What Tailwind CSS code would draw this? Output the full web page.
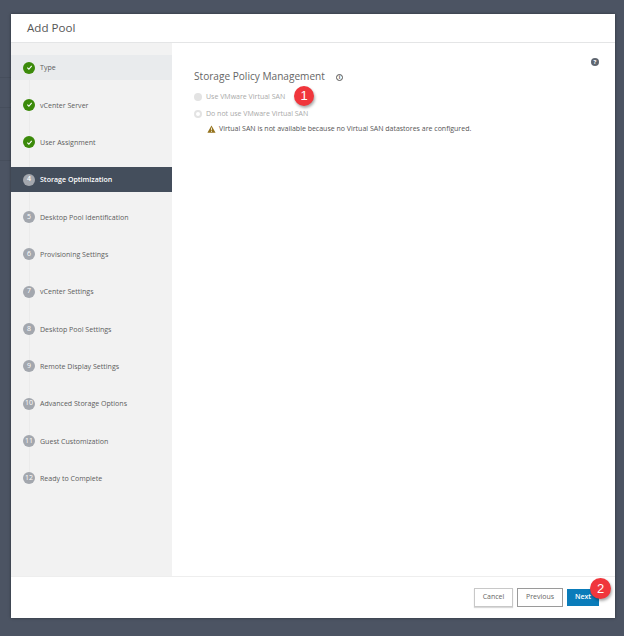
<!DOCTYPE html>
<html lang="en">
<head>
    <meta charset="UTF-8">
    <meta name="viewport" content="width=device-width, initial-scale=1.0">
    <title>Add Pool</title>
    <script src="https://cdn.jsdelivr.net/npm/@tailwindcss/browser@4"></script>
</head>
<body class="relative w-[624px] h-[636px] overflow-hidden bg-[#4c5463] font-['Open_Sans',sans-serif] pt-[14px] pl-[11px]">
    <!-- page dimmed behind the modal -->
    <div class="absolute left-0 top-0 w-[11px] h-[240px]">
        <div class="absolute left-0 top-[77px] w-full border-t border-[#464e5c]"></div>
        <div class="absolute left-0 top-[107px] w-full border-t border-[#464e5c]"></div>
        <div class="absolute left-0 top-[160px] w-full border-t border-[#464e5c]"></div>
    </div>

    <div class="relative w-[604px] h-[604px] bg-white flex flex-col shadow-[0_0_3px_rgba(0,0,0,0.4)]">
        <div class="h-[29px] shrink-0 border-b border-[#e4e5e6] pl-[16px] text-[11.6px] leading-[27px] text-[#565656]">Add Pool</div>

        <div class="flex flex-1 min-h-0">
            <!-- wizard steps -->
            <div class="relative w-[161px] shrink-0 bg-[#f2f2f2] pt-[12px] text-[7.05px] text-[#5d5d5d]">
                <div class="absolute left-[17.5px] top-[20px] h-[420px] border-l border-[#ebebeb]"></div>
                <div class="relative h-[25px] mb-[12.36px] flex items-center pl-[12px] gap-[5px] bg-[#e9ebed]">
                    <span class="w-[12px] h-[12px] rounded-full bg-[#3b8a0a] flex items-center justify-center">
                        <svg width="7" height="7" viewBox="0 0 8 8" fill="none" stroke="white" stroke-width="1.3"><path d="M1.5 4.2 3.3 6 6.5 2.2"/></svg>
                    </span>
                    <span class="-mt-[1px]">Type</span>
                </div>
                <div class="relative h-[25px] mb-[12.36px] flex items-center pl-[12px] gap-[5px]">
                    <span class="w-[12px] h-[12px] rounded-full bg-[#3b8a0a] flex items-center justify-center">
                        <svg width="7" height="7" viewBox="0 0 8 8" fill="none" stroke="white" stroke-width="1.3"><path d="M1.5 4.2 3.3 6 6.5 2.2"/></svg>
                    </span>
                    <span>vCenter Server</span>
                </div>
                <div class="relative h-[25px] mb-[12.36px] flex items-center pl-[12px] gap-[5px]">
                    <span class="w-[12px] h-[12px] rounded-full bg-[#3b8a0a] flex items-center justify-center">
                        <svg width="7" height="7" viewBox="0 0 8 8" fill="none" stroke="white" stroke-width="1.3"><path d="M1.5 4.2 3.3 6 6.5 2.2"/></svg>
                    </span>
                    <span>User Assignment</span>
                </div>
                <div class="relative h-[25px] mb-[12.36px] flex items-center pl-[12px] gap-[5px] bg-[#444e5c] text-white font-semibold">
                    <span class="w-[12px] h-[12px] rounded-full bg-[#a3a7ae] flex items-center justify-center text-[7px] text-white">4</span>
                    <span>Storage Optimization</span>
                </div>
                <div class="relative h-[25px] mb-[12.36px] flex items-center pl-[12px] gap-[5px]">
                    <span class="w-[12px] h-[12px] rounded-full bg-[#a3a7ae] flex items-center justify-center text-[7px] text-white">5</span>
                    <span>Desktop Pool Identification</span>
                </div>
                <div class="relative h-[25px] mb-[12.36px] flex items-center pl-[12px] gap-[5px]">
                    <span class="w-[12px] h-[12px] rounded-full bg-[#a3a7ae] flex items-center justify-center text-[7px] text-white">6</span>
                    <span>Provisioning Settings</span>
                </div>
                <div class="relative h-[25px] mb-[12.36px] flex items-center pl-[12px] gap-[5px]">
                    <span class="w-[12px] h-[12px] rounded-full bg-[#a3a7ae] flex items-center justify-center text-[7px] text-white">7</span>
                    <span>vCenter Settings</span>
                </div>
                <div class="relative h-[25px] mb-[12.36px] flex items-center pl-[12px] gap-[5px]">
                    <span class="w-[12px] h-[12px] rounded-full bg-[#a3a7ae] flex items-center justify-center text-[7px] text-white">8</span>
                    <span>Desktop Pool Settings</span>
                </div>
                <div class="relative h-[25px] mb-[12.36px] flex items-center pl-[12px] gap-[5px]">
                    <span class="w-[12px] h-[12px] rounded-full bg-[#a3a7ae] flex items-center justify-center text-[7px] text-white">9</span>
                    <span>Remote Display Settings</span>
                </div>
                <div class="relative h-[25px] mb-[12.36px] flex items-center pl-[12px] gap-[5px]">
                    <span class="w-[12px] h-[12px] rounded-full bg-[#a3a7ae] flex items-center justify-center text-[7px] text-white">10</span>
                    <span>Advanced Storage Options</span>
                </div>
                <div class="relative h-[25px] mb-[12.36px] flex items-center pl-[12px] gap-[5px]">
                    <span class="w-[12px] h-[12px] rounded-full bg-[#a3a7ae] flex items-center justify-center text-[7px] text-white">11</span>
                    <span>Guest Customization</span>
                </div>
                <div class="relative h-[25px] flex items-center pl-[12px] gap-[5px]">
                    <span class="w-[12px] h-[12px] rounded-full bg-[#a3a7ae] flex items-center justify-center text-[7px] text-white">12</span>
                    <span>Ready to Complete</span>
                </div>
            </div>

            <!-- main panel -->
            <div class="relative flex-1 pl-[22px] pt-[26px]">
                <span class="absolute right-[16px] top-[15px] w-[8px] h-[8px] rounded-full bg-[#5f6670] text-white text-[6px] leading-[8px] text-center font-bold">?</span>
                <div class="flex items-center h-[16px] w-[384px] text-[10.1px] text-[#666]">
                    <span>Storage Policy Management</span>
                    <span class="ml-[11px] w-[7px] h-[7px] rounded-full border border-[#555] text-[5px] leading-[5px] text-center font-bold text-[#555]">i</span>
                </div>
                <div class="relative flex items-center gap-[4px] h-[12px] mt-[6px] text-[7px] text-[#a9a9a9]">
                    <span class="w-[8px] h-[8px] rounded-full bg-[#e3e3e3]"></span>
                    <span>Use VMware Virtual SAN</span>
                    <span class="absolute left-[100px] top-[-5px] w-[20px] h-[20px] rounded-full bg-[#f0363c] text-white text-[13px] leading-[20px] text-center font-['Liberation_Sans',sans-serif] shadow-[1px_2px_3px_rgba(0,0,0,0.35)]">1</span>
                </div>
                <div class="flex items-center gap-[4px] h-[12px] mt-[5px] text-[7px] text-[#a9a9a9]">
                    <span class="w-[8px] h-[8px] rounded-full border-2 border-[#e3e3e3] bg-white"></span>
                    <span>Do not use VMware Virtual SAN</span>
                </div>
                <div class="flex items-center gap-[3px] h-[12px] mt-[3px] ml-[13px] text-[7px] text-[#555]">
                    <svg width="9" height="8" viewBox="0 0 10 9"><path d="M5 0.5 9.6 8.6H0.4Z" fill="#94721c"/><path d="M5 3v3M5 6.8v1" stroke="white" stroke-width="0.9"/></svg>
                    <span>Virtual SAN is not available because no Virtual SAN datastores are configured.</span>
                </div>
            </div>
        </div>

        <!-- footer -->
        <div class="h-[42px] shrink-0 border-t border-[#eeeeee] flex justify-end gap-[4px] pt-[11px] pr-[16px] text-[7px]">
            <button class="relative w-[39px] h-[19px] border border-[#c8c8c8] text-[#666] shadow-[0_1px_1px_rgba(0,0,0,0.15)]">Cancel</button>
            <button class="w-[46px] h-[19px] border border-[#9a9a9a] text-[#666]">Previous</button>
            <button class="relative w-[32px] h-[17px] mt-[1px] bg-[#0a7cba] text-white font-semibold">Next
                <span class="absolute left-[23px] top-[-11px] w-[21px] h-[21px] rounded-full bg-[#f0363c] text-white text-[13px] font-normal leading-[21px] text-center font-['Liberation_Sans',sans-serif] shadow-[1px_2px_3px_rgba(0,0,0,0.35)]">2</span>
            </button>
        </div>
    </div>
</body>
</html>
